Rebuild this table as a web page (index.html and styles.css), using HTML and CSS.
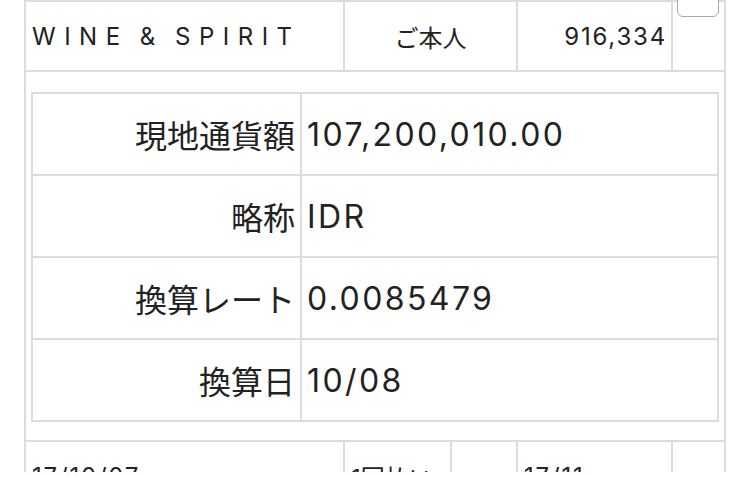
FILE: index.html
```html
<!DOCTYPE html>
<html lang="ja">
<head>
<meta charset="utf-8">
<title>明細</title>
<link rel="stylesheet" href="styles.css">
</head>
<body>
<div class="page">
  <div class="list">
    <div class="row row-main">
      <div class="cell cell-name">WINE &amp; SPIRIT</div>
      <div class="cell cell-center">ご本人</div>
      <div class="cell cell-right num">916,334</div>
      <div class="cell cell-check"><span class="checkbox"></span></div>
    </div>
    <div class="row row-detail">
      <div class="detail">
        <div class="d-label">現地通貨額</div>
        <div class="d-value num">107,200,010.00</div>
        <div class="d-label">略称</div>
        <div class="d-value num">IDR</div>
        <div class="d-label">換算レート</div>
        <div class="d-value num">0.0085479</div>
        <div class="d-label">換算日</div>
        <div class="d-value num">10/08</div>
      </div>
    </div>
    <div class="row row-main row-five">
      <div class="cell num">17/10/07</div>
      <div class="cell">1回払い</div>
      <div class="cell"></div>
      <div class="cell num">17/11</div>
      <div class="cell"></div>
    </div>
  </div>
</div>
</body>
</html>
```

FILE: styles.css
```css
html, body {
  margin: 0;
  padding: 0;
  background: #ffffff;
}

body {
  font-family: Inter, "Noto Sans CJK JP", sans-serif;
  color: #222222;
}

.page {
  height: 472px;
  overflow: hidden;
}

.list {
  margin-left: 24px;
  width: 702px;
  box-sizing: border-box;
  border-left: 2px solid #dcdcdc;
  border-top: 2px solid #dcdcdc;
}

.row {
  box-sizing: border-box;
  border-bottom: 2px solid #dcdcdc;
}

.row-main {
  display: grid;
  grid-template-columns: 319px 173px 155px 53px;
  height: 70px;
}

.row-five {
  grid-template-columns: 319px 107px 66px 155px 53px;
}

.cell {
  box-sizing: border-box;
  border-right: 2px solid #dcdcdc;
  display: flex;
  align-items: center;
  padding: 0 6px;
  font-size: 24px;
  white-space: nowrap;
}

.num {
  letter-spacing: 0.075em;
}

.cell-right.num {
  padding-right: 4px;
}

.cell-name {
  letter-spacing: 8.5px;
  word-spacing: -4px;
}

.cell-center {
  justify-content: center;
}

.cell-right {
  justify-content: flex-end;
}

.cell-check {
  position: relative;
}

.checkbox {
  position: absolute;
  left: 4px;
  top: -27px;
  width: 42px;
  height: 42px;
  box-sizing: border-box;
  border: 1px solid #a8a8a8;
  border-radius: 6px;
  background: #ffffff;
}

.row-detail {
  border-right: 2px solid #dcdcdc;
  padding: 20px 5px 18px;
}

.detail {
  display: grid;
  grid-template-columns: 269px 1fr;
  grid-auto-rows: 82px;
  border-left: 2px solid #dcdcdc;
  border-top: 2px solid #dcdcdc;
  font-size: 32px;
}

.d-label,
.d-value {
  box-sizing: border-box;
  border-right: 2px solid #dcdcdc;
  border-bottom: 2px solid #dcdcdc;
  display: flex;
  align-items: center;
  white-space: nowrap;
}

.d-label {
  justify-content: flex-end;
  padding-right: 5px;
}

.d-value {
  padding-left: 5px;
}
```
